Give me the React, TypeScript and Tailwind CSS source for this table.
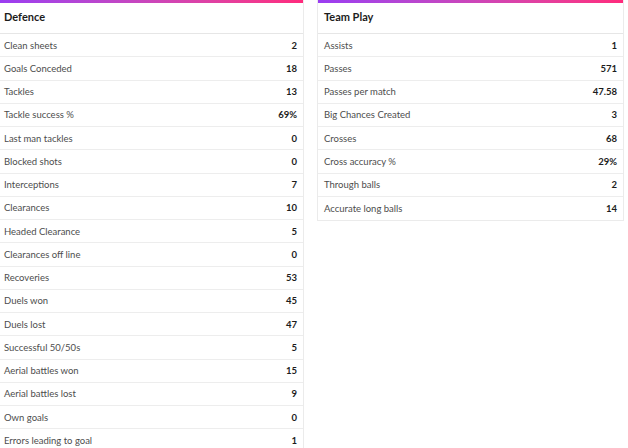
const defence: [string, string][] = [
  ['Clean sheets', '2'],
  ['Goals Conceded', '18'],
  ['Tackles', '13'],
  ['Tackle success %', '69%'],
  ['Last man tackles', '0'],
  ['Blocked shots', '0'],
  ['Interceptions', '7'],
  ['Clearances', '10'],
  ['Headed Clearance', '5'],
  ['Clearances off line', '0'],
  ['Recoveries', '53'],
  ['Duels won', '45'],
  ['Duels lost', '47'],
  ['Successful 50/50s', '5'],
  ['Aerial battles won', '15'],
  ['Aerial battles lost', '9'],
  ['Own goals', '0'],
  ['Errors leading to goal', '1'],
];

const teamPlay: [string, string][] = [
  ['Assists', '1'],
  ['Passes', '571'],
  ['Passes per match', '47.58'],
  ['Big Chances Created', '3'],
  ['Crosses', '68'],
  ['Cross accuracy %', '29%'],
  ['Through balls', '2'],
  ['Accurate long balls', '14'],
];

const StatCard = ({ title, rows }: { title: string; rows: [string, string][] }) => (
  <div className="w-[307px] shrink-0 self-start bg-white border border-t-0 border-[#ebebeb]">
    <div className="h-[3px] bg-gradient-to-r from-[#9a3cf2] to-[#ff2a7c]" />
    <div className="h-[31px] flex items-center px-[6px] pb-[1px] text-[11px] font-bold text-[#1c1c1c] border-b border-[#e6e6e6]">
      {title}
    </div>
    {rows.map(([label, value]) => (
      <div
        key={label}
        className="h-[23.25px] flex items-center justify-between px-[6px] pt-[1px] border-b border-[#ededed] last:border-b-0"
      >
        <span className="text-[9.5px] text-[#4d4d4d]">{label}</span>
        <span className="text-[9.5px] font-bold text-[#1c1c1c]">{value}</span>
      </div>
    ))}
  </div>
);

export default function App() {
  return (
    <div className="w-[628px] h-[448px] overflow-hidden bg-white" style={{ fontFamily: 'Lato, "Open Sans", sans-serif' }}>
      <div className="flex gap-[13px] ml-[-3px]">
        <StatCard title="Defence" rows={defence} />
        <StatCard title="Team Play" rows={teamPlay} />
      </div>
    </div>
  );
}
